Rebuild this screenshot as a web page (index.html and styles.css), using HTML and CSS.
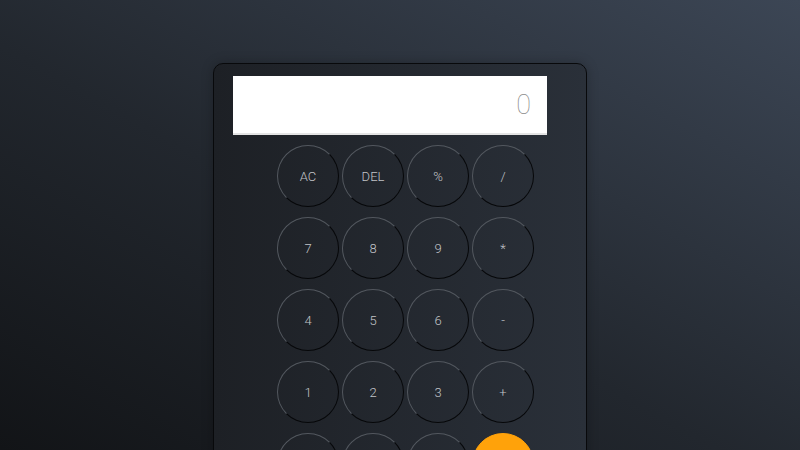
FILE: index.html
```html
<!DOCTYPE html>
<html lang="en">
<head>
  <meta charset="UTF-8">
  <meta name="viewport" content="width=device-width, initial-scale=1.0">
  <title>Calculator</title>
  <link rel="stylesheet" href="styles.css">
</head>
<body>
  <div class="calculator">
    <div class="display" id="display">0</div>
    <div class="keys">
      <button class="key">AC</button>
      <button class="key">DEL</button>
      <button class="key">%</button>
      <button class="key">/</button>

      <button class="key">7</button>
      <button class="key">8</button>
      <button class="key">9</button>
      <button class="key">*</button>

      <button class="key">4</button>
      <button class="key">5</button>
      <button class="key">6</button>
      <button class="key">-</button>

      <button class="key">1</button>
      <button class="key">2</button>
      <button class="key">3</button>
      <button class="key">+</button>

      <button class="key">0</button>
      <button class="key">00</button>
      <button class="key">.</button>
      <button class="key equals">=</button>
    </div>
  </div>
</body>
</html>
```

FILE: styles.css
```css
/* General Styles */
* {
  margin: 0;
  padding: 0;
  box-sizing: border-box;
}

body {
  font-family: Roboto, 'Noto Sans', sans-serif;
  background: linear-gradient(to top right, #121417 0%, #22272e 45%, #3c4655 100%);
  display: flex;
  justify-content: center;
  align-items: flex-start;
  height: 100vh;
  padding-top: 63px;
  overflow: hidden;
}

.calculator {
  width: 374px;
  background: linear-gradient(to right, #1d2025, #2a3039);
  border: 1px solid #08090b;
  border-radius: 10px;
  padding: 12px 19px 30px;
  box-shadow: 0 0 12px rgba(0, 0, 0, 0.25);
}

.display {
  width: 314px;
  height: 59px;
  background: #fff;
  border-bottom: 2px solid #e4e4e4;
  color: #8c8c8c;
  font-size: 27px;
  font-weight: 100;
  text-align: right;
  line-height: 58px;
  padding-right: 16px;
}

/* keypad: 4 round keys per row */
.keys {
  display: grid;
  grid-template-columns: repeat(4, 62px);
  column-gap: 3px;
  row-gap: 10px;
  margin: 10px 0 0 44px;
}

.key {
  width: 62px;
  height: 62px;
  border-radius: 50%;
  background: transparent;
  border: 1.5px solid;
  border-color: #53585f #060709 #060709 #53585f;
  color: #c2c4c8;
  font-family: Roboto, sans-serif;
  font-size: 13px;
  font-weight: 300;
  cursor: pointer;
}

.equals {
  background: #ffa20a;
  border-color: #ffa20a;
  color: #fff;
}
```
